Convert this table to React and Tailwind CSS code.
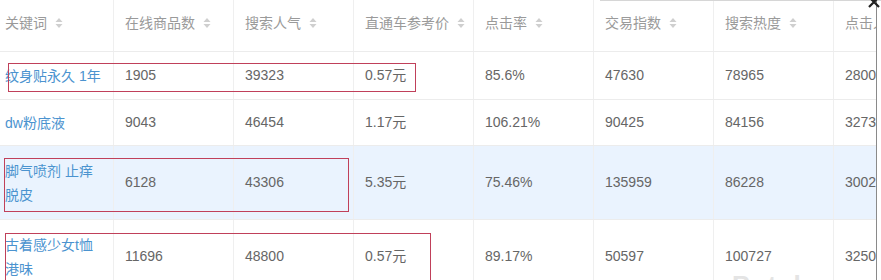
import React from 'react';

const columns = ['关键词', '在线商品数', '搜索人气', '直通车参考价', '点击率', '交易指数', '搜索热度', '点击人气'];

const rows = [
    { h: 'h-[48px]', bg: 'bg-white', key: ['纹身贴永久 1年'], cells: ['1905', '39323', '0.57元', '85.6%', '47630', '78965', '28004'] },
    { h: 'h-[46px]', bg: 'bg-white', key: ['dw粉底液'], cells: ['9043', '46454', '1.17元', '106.21%', '90425', '84156', '32731'] },
    { h: 'h-[74px]', bg: 'bg-[#eaf3fe]', key: ['脚气喷剂 止痒', '脱皮'], cells: ['6128', '43306', '5.35元', '75.46%', '135959', '86228', '30021'] },
    { h: 'h-[74px]', bg: 'bg-white', key: ['古着感少女t恤', '港味'], cells: ['11696', '48800', '0.57元', '89.17%', '50597', '100727', '32500'] },
];

const SortIcon = () => (
    <svg width="8" height="12" viewBox="0 0 8 12" className="ml-2 mt-[4px] shrink-0">
        <path d="M4 1 L7.5 5 L0.5 5 Z" fill="#cfcfcf" />
        <path d="M4 11 L7.5 7 L0.5 7 Z" fill="#cfcfcf" />
    </svg>
);

const App = () => {
    return (
        <div
            className="relative w-[881px] h-[280px] overflow-hidden bg-white"
            style={{ fontFamily: '"Liberation Sans", "Noto Sans CJK SC", sans-serif' }}
        >
            <div className="w-[877px] h-full overflow-hidden border-r border-[#8a8a8a]">
                <div className="-ml-[6px] w-[1000px] text-[14px]">
                    {/* header */}
                    <div className="flex h-[52px] border-b border-[#ececec] bg-white">
                        {columns.map((c, i) => (
                            <div
                                key={c}
                                className={`w-[120px] shrink-0 flex items-start pt-[13px] px-[11px] text-[#9a9a9a] whitespace-nowrap ${i < columns.length - 1 ? 'border-r border-[#efefef]' : ''}`}
                            >
                                <span>{c}</span>
                                {i < columns.length - 1 && <SortIcon />}
                            </div>
                        ))}
                    </div>

                    {/* body */}
                    {rows.map((r, ri) => (
                        <div key={ri} className={`flex ${r.h} border-b border-[#ececec] ${r.bg}`}>
                            <div className="w-[120px] shrink-0 flex flex-col justify-center px-[11px] leading-[24px] border-r border-[#efefef] text-[#4b93cf] whitespace-nowrap">
                                {r.key.map((line) => (
                                    <span key={line}>{line}</span>
                                ))}
                            </div>
                            {r.cells.map((v, ci) => (
                                <div
                                    key={ci}
                                    className={`w-[120px] shrink-0 flex items-center px-[11px] text-[#666666] whitespace-nowrap ${ci < r.cells.length - 1 ? 'border-r border-[#efefef]' : ''}`}
                                >
                                    {v}
                                </div>
                            ))}
                        </div>
                    ))}
                </div>
            </div>

            {/* red annotation boxes */}
            <div className="absolute left-[8px] top-[63px] w-[408px] h-[29px] border border-[#c0405a]" />
            <div className="absolute left-[4px] top-[158px] w-[345px] h-[54px] border border-[#c0405a]" />
            <div className="absolute left-[5px] top-[233px] w-[426px] h-[60px] border border-[#c0405a]" />

            {/* modal edge + close mark */}
            <div className="absolute left-[600px] top-0 w-[281px] h-px bg-[#d6d6d6]" />
            <svg className="absolute right-[1px] -top-[4px]" width="12" height="12" viewBox="0 0 12 12">
                <path d="M1 1 L11 11 M11 1 L1 11" stroke="#222" strokeWidth="2.2" />
            </svg>

            {/* faint watermark */}
            <div className="absolute left-[732px] top-[266px] text-[26px] font-bold text-[#e4e4e4] tracking-wider">
                Betel
            </div>
        </div>
    );
};

export default App;
